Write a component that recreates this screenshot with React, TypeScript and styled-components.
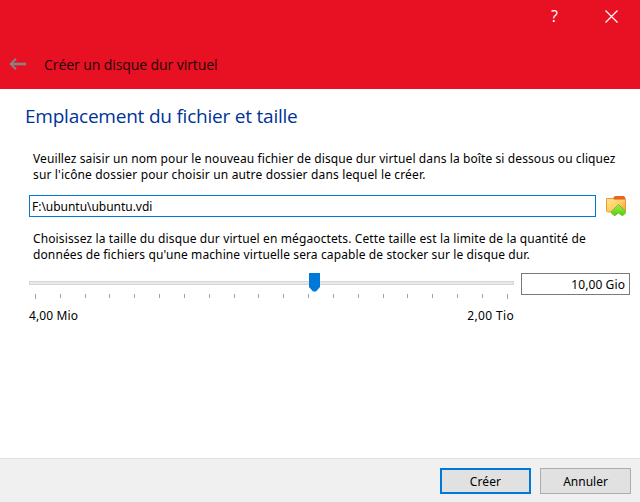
import React from "react";
import styled, { createGlobalStyle } from "styled-components";

const GlobalStyle = createGlobalStyle`
  * { box-sizing: border-box; }
  body { margin: 0; background: #fff; }
`;

const Dialog = styled.main`
  display: flex;
  flex-direction: column;
  width: 640px;
  height: 502px;
  overflow: hidden;
  background: #fff;
  color: #000;
  font: 12px/16px "Noto Sans", sans-serif;
`;

const Header = styled.header`
  height: 89px;
  background: #e81123;
`;

const WindowControls = styled.div`
  display: flex;
  justify-content: flex-end;
  height: 49px;
`;

const ControlButton = styled.button`
  display: flex;
  align-items: center;
  justify-content: center;
  width: 57px;
  height: 32px;
  padding: 0;
  border: 0;
  background: transparent;
  color: #fff;
  font: 16px/32px "Open Sans", sans-serif;
`;

const TitleRow = styled.div`
  display: flex;
  align-items: center;
  height: 31px;
  padding-left: 9px;
  gap: 18px;
`;

const Line = styled.span<{ $spacing?: number }>`
  display: block;
  white-space: pre;
  letter-spacing: ${(p) => p.$spacing ?? 0}px;
`;

const Title = styled.h1`
  margin: 0;
  font: 14px/20px "Open Sans", sans-serif;
  color: #240306;
`;

const Body = styled.section`
  flex: 1;
  padding: 14px 10px 0 29px;
`;

const Heading = styled.h2`
  margin: 0 0 0 -4px;
  color: #003399;
  font: 19px/26px "Open Sans", sans-serif;
`;

const Paragraph = styled.p<{ $top: number }>`
  margin: ${(p) => p.$top}px 0 0 4px;
`;

const PathRow = styled.div`
  display: flex;
  align-items: center;
  gap: 9px;
  margin-top: 12px;
  height: 22px;
`;

const PathInput = styled.div`
  width: 567px;
  height: 22px;
  padding: 3px 2px;
  border: 1px solid #0078d7;
`;

const SizeRow = styled.div`
  display: flex;
  gap: 7px;
  margin-top: 10px;
`;

const SliderColumn = styled.div`
  width: 485px;
`;

const Groove = styled.div`
  position: relative;
  height: 4px;
  margin-top: 8px;
  border: 1px solid #d6d6d6;
  background: #e7eaea;
`;

const Handle = styled.svg`
  position: absolute;
  left: 279px;
  top: -9px;
`;

const Ticks = styled.div`
  display: flex;
  justify-content: space-between;
  height: 5px;
  margin: 9px 6px 0;
`;

const Tick = styled.i<{ $end: boolean }>`
  width: 1px;
  height: ${(p) => (p.$end ? 5 : 4)}px;
  background: #a6a297;
`;

const RangeLabels = styled.div`
  display: flex;
  justify-content: space-between;
  margin-top: 9px;
`;

const SizeInput = styled.div`
  display: flex;
  justify-content: flex-end;
  width: 109px;
  height: 22px;
  padding: 3px 4px;
  border: 1px solid #7a7a7a;
`;

const Footer = styled.footer`
  display: flex;
  justify-content: flex-end;
  gap: 9px;
  height: 44px;
  padding: 9px 9px 0 0;
  border-top: 1px solid #dfdfdf;
  background: #f0f0f0;
`;

const Button = styled.button<{ $primary?: boolean }>`
  display: flex;
  align-items: center;
  justify-content: center;
  width: 91px;
  height: 26px;
  padding: 1px 0 0;
  border: ${(p) => (p.$primary ? "2px solid #0078d7" : "1px solid #adadad")};
  background: #e1e1e1;
  color: #000;
  font: inherit;
`;

const BackArrow = () => (
  <svg width="17" height="13" viewBox="0 0 17 13" fill="none" stroke="#888480">
    <path d="M2 6H17" strokeWidth="2.6" />
    <path d="M7 .8L1.8 6L7 11.2" strokeWidth="2" />
  </svg>
);

const FolderIcon = () => (
  <svg width="22" height="22" viewBox="0 0 22 22">
    <defs>
      <linearGradient id="folder" x1="0" y1="0" x2="1" y2="1">
        <stop offset="0" stopColor="#ffe88c" />
        <stop offset="0.5" stopColor="#ffd06a" />
        <stop offset="1" stopColor="#f89a28" />
      </linearGradient>
      <linearGradient id="arrow" x1="0" y1="0" x2="0" y2="1">
        <stop offset="0" stopColor="#a4ea60" />
        <stop offset="1" stopColor="#55cf05" />
      </linearGradient>
    </defs>
    <path d="M8 5V3L10 1H19L20.5 3V6H8Z" fill="#ea651d" />
    <path d="M1.5 3.5H8L9.5 4.5H20.5V16L19 17H2.5L1.5 16Z" fill="url(#folder)" stroke="#e59a3c" />
    <path d="M13.5 9.5L20.5 16.5V18L18 20.5H17L13.5 18L10 20.5H9L6.5 18V16.5Z" fill="url(#arrow)" stroke="#5cbd20" strokeWidth="0.8" />
  </svg>
);

export default function App() {
  return (
    <Dialog>
      <GlobalStyle />
      <Header>
        <WindowControls>
          <ControlButton>?</ControlButton>
          <ControlButton aria-label="Fermer">
            <svg width="13" height="13" viewBox="0 0 13 13" stroke="#fff" strokeWidth="1.2">
              <path d="M.5 .5L12.5 12.5M12.5 .5L.5 12.5" />
            </svg>
          </ControlButton>
        </WindowControls>
        <TitleRow>
          <BackArrow />
          <Title><Line $spacing={-0.08}>Créer un disque dur virtuel</Line></Title>
        </TitleRow>
      </Header>
      <Body>
        <Heading><Line $spacing={-0.22}>Emplacement du fichier et taille</Line></Heading>
        <Paragraph $top={22}>
          <Line $spacing={0.1}>Veuillez saisir un nom pour le nouveau fichier de disque dur virtuel dans la boîte si dessous ou cliquez</Line>
          <Line $spacing={0.155}>sur l'icône dossier pour choisir un autre dossier dans lequel le créer.</Line>
        </Paragraph>
        <PathRow>
          <PathInput><Line $spacing={-0.03}>F:\ubuntu\ubuntu.vdi</Line></PathInput>
          <FolderIcon />
        </PathRow>
        <Paragraph $top={14}>
          <Line $spacing={0.12}>Choisissez la taille du disque dur virtuel en mégaoctets. Cette taille est la limite de la quantité de</Line>
          <Line $spacing={0.11}>données de fichiers qu'une machine virtuelle sera capable de stocker sur le disque dur.</Line>
        </Paragraph>
        <SizeRow>
          <SliderColumn>
            <Groove>
              <Handle width="11" height="19" viewBox="0 0 11 19">
                <path d="M0 0H11V14L7 18.5H4L0 14Z" fill="#0078d7" />
              </Handle>
            </Groove>
            <Ticks>
              {Array.from({ length: 20 }, (_, i) => (
                <Tick key={i} $end={i === 0 || i === 19} />
              ))}
            </Ticks>
            <RangeLabels>
              <Line $spacing={0.12}>4,00 Mio</Line>
              <Line $spacing={0.35}>2,00 Tio</Line>
            </RangeLabels>
          </SliderColumn>
          <SizeInput><Line $spacing={0.1}>10,00 Gio</Line></SizeInput>
        </SizeRow>
      </Body>
      <Footer>
        <Button $primary><Line $spacing={0.1}>Créer</Line></Button>
        <Button><Line>Annuler</Line></Button>
      </Footer>
    </Dialog>
  );
}
